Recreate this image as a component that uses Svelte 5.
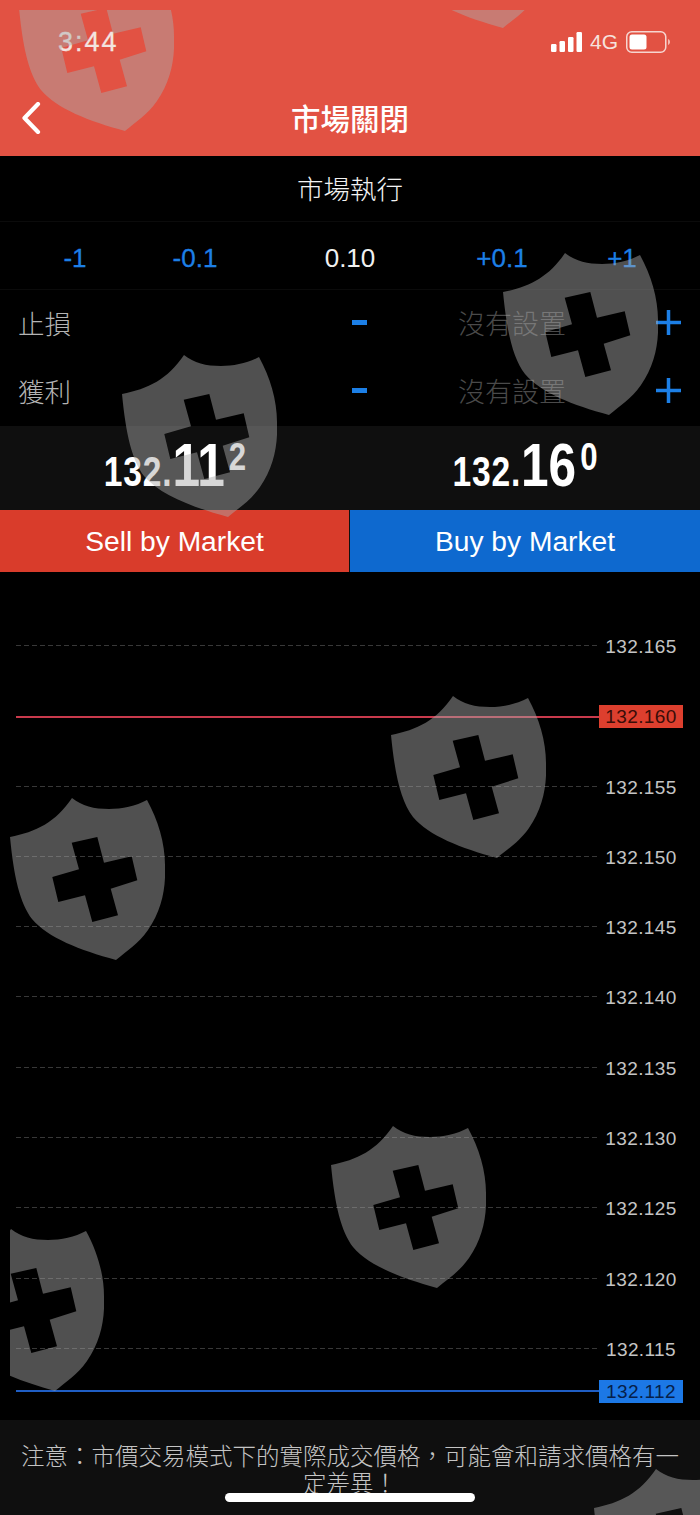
<script lang="ts">
  // Watermark shields sit over the whole page; each entry is the shield's top-left corner.
  const shields = [
    [9, -41], [387, -144], [493, 243], [112, 345], [381, 686],
    [0, 788], [321, 1116], [-61, 1219], [584, 1459],
  ];

  const ticks = [
    { price: "132.165" },
    { price: "132.160", kind: "ask" },
    { price: "132.155" },
    { price: "132.150" },
    { price: "132.145" },
    { price: "132.140" },
    { price: "132.135" },
    { price: "132.130" },
    { price: "132.125" },
    { price: "132.120" },
    { price: "132.115" },
    { price: "132.112", kind: "bid" },
  ];

  const steps = ["-1", "-0.1", "0.10", "+0.1", "+1"];
  const limits = ["止損", "獲利"];
  // Full-width punctuation, as on the device.
  const note = "注意\uFF1A市價交易模式下的實際成交價格\uFF0C可能會和請求價格有一定差異\uFF01";
</script>

<div class="page">
  <header class="top">
    <div class="status">
      <span class="time">3:44</span>
      <div class="indicators">
        <svg class="signal" width="31" height="20" viewBox="0 0 31 20" aria-hidden="true">
          <rect x="0" y="12" width="5.5" height="8" rx="1.2" />
          <rect x="8.5" y="9" width="5.5" height="11" rx="1.2" />
          <rect x="17" y="5" width="5.5" height="15" rx="1.2" />
          <rect x="25.5" y="0" width="5.5" height="20" rx="1.2" />
        </svg>
        <span class="net">4G</span>
        <svg class="battery" width="44" height="22" viewBox="0 0 44 22" aria-hidden="true">
          <rect x="0.75" y="0.75" width="39" height="20.5" rx="5" fill="none" stroke="#f6d5d0" stroke-width="1.5" />
          <rect x="3.5" y="3.5" width="17" height="15" rx="2.5" fill="#fff" />
          <path d="M42 8v6c1.2-.4 2-1.6 2-3s-.8-2.600-2-3z" fill="#f6b8b0" />
        </svg>
      </div>
    </div>
    <div class="nav">
      <svg class="back" width="20" height="32" viewBox="0 0 20 32" aria-hidden="true">
        <path d="M17 2 3.500 16 17 30" fill="none" stroke="#fff" stroke-width="4.200" stroke-linecap="round" stroke-linejoin="round" />
      </svg>
      <h1>市場關閉</h1>
    </div>
  </header>

  <div class="mode row">市場執行</div>

  <div class="steps row">
    {#each steps as step, i}
      <span class="step" class:volume={i === 2}>{step}</span>
    {/each}
  </div>

  {#each limits as label}
    <div class="limit row">
      <span class="label">{label}</span>
      <svg class="sign" width="15" height="5" viewBox="0 0 15 5" aria-hidden="true"><rect width="15" height="5" /></svg>
      <span class="unset">沒有設置</span>
      <svg class="sign" width="25" height="25" viewBox="0 0 25 25" aria-hidden="true"><path d="M0 10.750h10.750V0h3.500v10.750H25v3.500H14.250V25h-3.500V14.250H0z" /></svg>
    </div>
  {/each}

  <div class="quotes">
    <div class="quote"><span class="small">132.</span><span class="big">11</span><span class="sup">2</span></div>
    <div class="quote"><span class="small">132.</span><span class="big">16</span><span class="sup">0</span></div>
  </div>

  <div class="actions">
    <button class="sell">Sell by Market</button>
    <button class="buy">Buy by Market</button>
  </div>

  <div class="chart">
    {#each ticks as tick}
      <div class="tick {tick.kind ?? ''}">
        <span class="line"></span>
        <span class="price">{tick.price}</span>
      </div>
    {/each}
  </div>

  <footer class="note">
    <p>{note}</p>
  </footer>

  <div class="home"></div>

  <div class="watermarks" aria-hidden="true">
    {#each shields as [x, y]}
      <svg class="shield" style="left: {x}px; top: {y}px" width="155" height="162" viewBox="0 0 155 162">
        <path
          fill-rule="evenodd"
          d="M62 0C72 8 84 11 99 11C112 11 126 8 137 2C148 22 155 45 155 67C156 90 152 112 138 132C128 146 118 152 106 162C70 152 38 140 22 121C10 105 4 80 0 39C26 34 46 24 62 0ZM61.700 44.700 87.300 39 94 64.700 121.700 58.300 127.300 82.300 100.700 90.700 108 117.300 82.300 124 75 97.300 48.300 104 42.300 79 69 71.300Z"
        />
      </svg>
    {/each}
  </div>
</div>

<style>
  :global(body) {
    background: #000;
  }
  .page {
    position: relative;
    width: 700px;
    height: 1515px;
    overflow: hidden;
    display: flex;
    flex-direction: column;
    background: #000;
    color: #fff;
    font-family: "Liberation Sans", "Noto Sans CJK TC", sans-serif;
  }
  .top {
    height: 156px;
    background: #e25243;
    flex: none;
    display: flex;
    flex-direction: column;
  }
  .status {
    height: 84px;
    padding: 0 30px 0 58px;
    display: flex;
    align-items: center;
    justify-content: space-between;
  }
  .time {
    font-size: 27px;
    letter-spacing: 2px;
    color: #f3e4e0;
    -webkit-text-stroke: 0.3px #f3e4e0;
  }
  .indicators {
    display: flex;
    align-items: center;
  }
  .signal {
    fill: #fff;
    margin-right: 8px;
  }
  .net {
    font-size: 21px;
    color: #f6e2de;
    margin-right: 8px;
  }
  .nav {
    position: relative;
    flex: 1;
    display: flex;
    align-items: center;
    justify-content: center;
    padding-bottom: 4px;
  }
  .back {
    position: absolute;
    left: 21px;
    top: 18px;
  }
  h1 {
    margin: 0;
    font-size: 29.500px;
    font-weight: 500;
    line-height: 1;
    font-family: "Noto Sans CJK TC", sans-serif;
  }
  .row {
    flex: none;
    height: 68px;
    border-bottom: 1px solid #0b0b0b;
    box-sizing: border-box;
    font-family: "Liberation Sans", "Noto Sans CJK TC", sans-serif;
  }
  .mode {
    height: 66px;
    display: flex;
    align-items: center;
    justify-content: center;
    padding-bottom: 3px;
    font-size: 26.500px;
    font-weight: 300;
    color: #f2f2f2;
  }
  .steps {
    display: grid;
    grid-template-columns: 120px 120px 190px 114px 126px;
    padding: 5px 0 0 15px;
    align-items: center;
    justify-items: center;
    font-size: 26px;
    color: #1c7fe6;
    -webkit-text-stroke: 0.3px #1c7fe6;
  }
  .volume {
    color: #f0f0f0;
    -webkit-text-stroke: 0;
  }
  .limit {
    display: grid;
    grid-template-columns: 334px 106px 108px 90px;
    padding: 0 0 3px 18px;
    align-items: center;
    font-size: 26.500px;
    font-weight: 300;
    border-bottom-color: transparent;
  }
  .label {
    color: #b4b4b4;
  }
  .sign {
    fill: #1c7fe6;
  }
  .limit .sign:last-child {
    margin-left: 90px;
  }
  .unset {
    color: #4a4a4a;
    font-size: 27px;
    white-space: nowrap;
  }
  .quotes {
    flex: none;
    height: 84px;
    background: #0f0f0f;
    display: grid;
    grid-template-columns: 1fr 1fr;
    box-sizing: border-box;
    padding-top: 6px;
  }
  /* No condensed face is installed, so the price is squeezed from Liberation Sans. */
  .quote {
    display: flex;
    justify-content: center;
    align-items: baseline;
    font-weight: 700;
    line-height: 66px;
    transform: scaleX(0.8);
  }
  .small {
    font-size: 42px;
    letter-spacing: 1px;
  }
  .big {
    font-size: 62px;
  }
  .sup {
    font-size: 39px;
    position: relative;
    top: -16px;
    margin-left: 5px;
  }
  .actions {
    flex: none;
    height: 62px;
    display: grid;
    grid-template-columns: 350px 350px;
  }
  button {
    border: none;
    padding: 0;
    color: #fff;
    font: inherit;
    font-size: 28.200px;
  }
  .sell {
    background: #d93c2b;
    border-right: 1px solid #111;
  }
  .buy {
    background: #0e69cf;
  }
  .chart {
    flex: 1;
    padding-top: 62px;
    display: flex;
    flex-direction: column;
    gap: 47.300px;
  }
  .tick {
    height: 23px;
    flex: none;
    display: flex;
    align-items: center;
    padding: 0 17px 0 16px;
  }
  .line {
    flex: 1;
    height: 1px;
    margin-right: 2px;
    background: repeating-linear-gradient(90deg, #383838 0 5px, transparent 5px 8px);
  }
  .price {
    width: 84px;
    box-sizing: border-box;
    text-align: center;
    font-size: 19px;
    letter-spacing: 0.4px;
    line-height: 23px;
    color: #c4c4c4;
    padding-top: 2px;
  }
  .ask {
    position: relative;
    top: 1px;
  }
  .tick.ask .line {
    height: 2px;
    background: #c93a4c;
    margin-right: 0;
  }
  .ask .price {
    background: #dd3f2e;
    color: #3a0d08;
    padding-top: 0;
  }
  .bid {
    margin-top: -27.300px;
  }
  .tick.bid .line {
    height: 2px;
    background: #1f5ec4;
    margin-right: 0;
  }
  .bid .price {
    background: #1c78e6;
    color: #06204a;
    padding-top: 0;
  }
  .note {
    flex: none;
    height: 95px;
    box-sizing: border-box;
    background: #0f0f0f;
    padding: 22px 18px 0;
  }
  .note p {
    margin: 0;
    text-align: center;
    font-size: 23.500px;
    line-height: 27px;
    font-weight: 300;
    color: #c4c4c4;
    font-family: "Noto Sans CJK TC", sans-serif;
  }
  .home {
    position: absolute;
    left: 225px;
    top: 1493px;
    width: 250px;
    height: 9px;
    border-radius: 5px;
    background: #fff;
  }
  .watermarks {
    position: absolute;
    inset: 10px 0 0 10px;
    overflow: hidden;
    pointer-events: none;
  }
  .shield {
    position: absolute;
    fill: rgba(170, 170, 170, 0.47);
  }
</style>
